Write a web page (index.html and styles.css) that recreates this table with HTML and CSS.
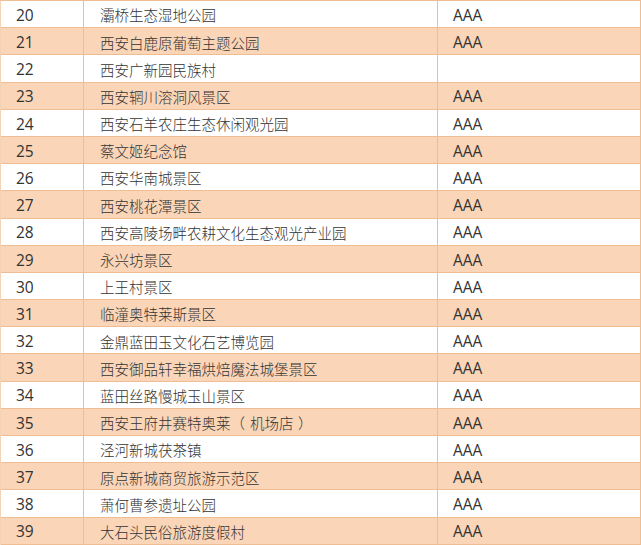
FILE: index.html
```html
<!DOCTYPE html>
<html lang="zh-CN">
<head>
<meta charset="utf-8">
<title>景区名单</title>
<link rel="stylesheet" href="styles.css">
</head>
<body>
<div class="table">
  <div class="row"><div class="cell num">20</div><div class="cell name">灞桥生态湿地公园</div><div class="cell grade">AAA</div></div>
  <div class="row alt"><div class="cell num">21</div><div class="cell name">西安白鹿原葡萄主题公园</div><div class="cell grade">AAA</div></div>
  <div class="row"><div class="cell num">22</div><div class="cell name">西安广新园民族村</div><div class="cell grade"></div></div>
  <div class="row alt"><div class="cell num">23</div><div class="cell name">西安辋川溶洞风景区</div><div class="cell grade">AAA</div></div>
  <div class="row"><div class="cell num">24</div><div class="cell name">西安石羊农庄生态休闲观光园</div><div class="cell grade">AAA</div></div>
  <div class="row alt"><div class="cell num">25</div><div class="cell name">蔡文姬纪念馆</div><div class="cell grade">AAA</div></div>
  <div class="row"><div class="cell num">26</div><div class="cell name">西安华南城景区</div><div class="cell grade">AAA</div></div>
  <div class="row alt"><div class="cell num">27</div><div class="cell name">西安桃花潭景区</div><div class="cell grade">AAA</div></div>
  <div class="row"><div class="cell num">28</div><div class="cell name">西安高陵场畔农耕文化生态观光产业园</div><div class="cell grade">AAA</div></div>
  <div class="row alt"><div class="cell num">29</div><div class="cell name">永兴坊景区</div><div class="cell grade">AAA</div></div>
  <div class="row"><div class="cell num">30</div><div class="cell name">上王村景区</div><div class="cell grade">AAA</div></div>
  <div class="row alt"><div class="cell num">31</div><div class="cell name">临潼奥特莱斯景区</div><div class="cell grade">AAA</div></div>
  <div class="row"><div class="cell num">32</div><div class="cell name">金鼎蓝田玉文化石艺博览园</div><div class="cell grade">AAA</div></div>
  <div class="row alt"><div class="cell num">33</div><div class="cell name">西安御品轩幸福烘焙魔法城堡景区</div><div class="cell grade">AAA</div></div>
  <div class="row"><div class="cell num">34</div><div class="cell name">蓝田丝路慢城玉山景区</div><div class="cell grade">AAA</div></div>
  <div class="row alt"><div class="cell num">35</div><div class="cell name">西安王府井赛特奥莱<span class="paren-l">（</span>机场店<span class="paren-r">）</span></div><div class="cell grade">AAA</div></div>
  <div class="row"><div class="cell num">36</div><div class="cell name">泾河新城茯茶镇</div><div class="cell grade">AAA</div></div>
  <div class="row alt"><div class="cell num">37</div><div class="cell name">原点新城商贸旅游示范区</div><div class="cell grade">AAA</div></div>
  <div class="row"><div class="cell num">38</div><div class="cell name">萧何曹参遗址公园</div><div class="cell grade">AAA</div></div>
  <div class="row alt"><div class="cell num">39</div><div class="cell name">大石头民俗旅游度假村</div><div class="cell grade">AAA</div></div>
</div>
</body>
</html>
```
FILE: styles.css
```css
html, body {
  margin: 0;
  padding: 0;
  background: #ffffff;
}

.table {
  width: 641px;
  box-sizing: border-box;
  border-top: 1px solid #efbd94;
  border-left: 1px solid #f3d2b6;
  display: flex;
  flex-direction: column;
  color: #333333;
}

.row {
  display: grid;
  grid-template-columns: 83px 354px 203px;
  height: 27.2px;
  box-sizing: border-box;
  border-bottom: 1px solid #efbd94;
  background: #ffffff;
}

.row.alt {
  background: #fad5b7;
}

.cell {
  display: flex;
  align-items: center;
  box-sizing: border-box;
  padding: 3px 0 0 16px;
  border-right: 1px solid #efbd94;
  white-space: nowrap;
  line-height: 1;
}

.num,
.grade {
  font-family: "Open Sans", "Noto Sans", sans-serif;
  font-size: 15.5px;
  padding-left: 15px;
}

.name {
  font-family: "Noto Sans CJK SC", "Microsoft YaHei", sans-serif;
  font-size: 14.5px;
  font-weight: 300;
}

.paren-l {
  margin-right: 0.35em;
}

.paren-r {
  margin-left: 0.3em;
}
```
